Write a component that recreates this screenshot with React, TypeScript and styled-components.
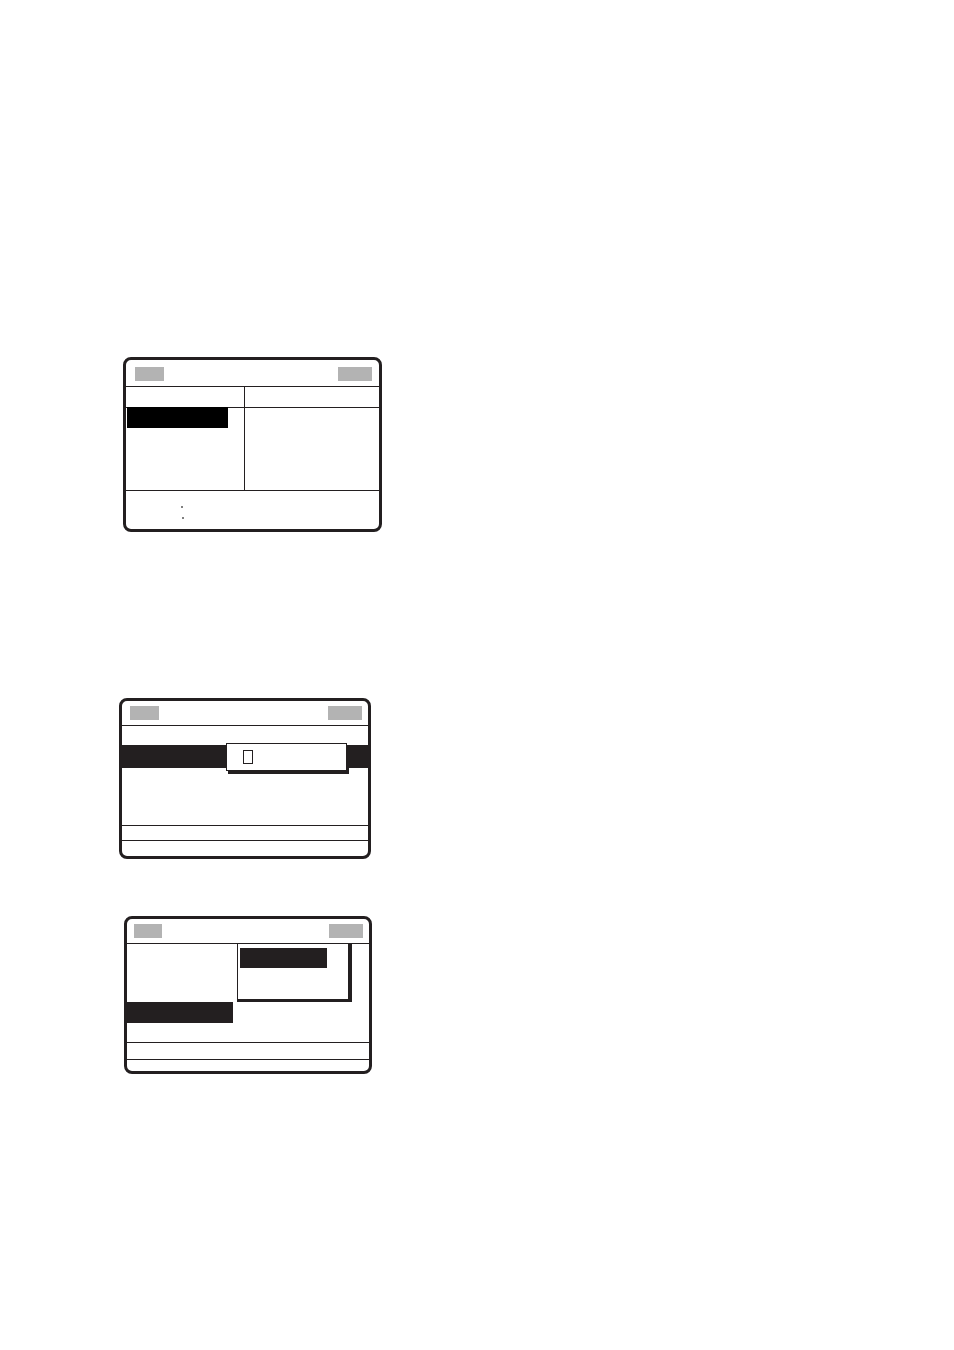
import React from "react";
import styled, { createGlobalStyle } from "styled-components";

const INK = "#231f20";
const GRAY = "#b3b3b3";

const Global = createGlobalStyle`
  html, body { margin: 0; padding: 0; background: #ffffff; }
  body { font-family: "Liberation Sans", Arial, sans-serif; }
`;

const Page = styled.div`
  width: 954px;
  height: 1350px;
  display: flex;
  flex-direction: column;
  align-items: flex-start;
  overflow: hidden;
`;

const Frame = styled.div<{ $w: number; $h: number; $left: number; $top: number }>`
  box-sizing: border-box;
  width: ${(p) => p.$w}px;
  height: ${(p) => p.$h}px;
  margin-left: ${(p) => p.$left}px;
  margin-top: ${(p) => p.$top}px;
  border: 3px solid ${INK};
  border-radius: 8px;
  display: flex;
  flex-direction: column;
  flex-shrink: 0;
  background: #fff;
`;

const Header = styled.div<{ $h: number; $pt: number; $pl: number; $pr: number }>`
  box-sizing: border-box;
  height: ${(p) => p.$h}px;
  padding: ${(p) => `${p.$pt}px ${p.$pr}px 0 ${p.$pl}px`};
  display: flex;
  justify-content: space-between;
  align-items: flex-start;
  flex-shrink: 0;
`;

const Key = styled.span<{ $w: number }>`
  display: block;
  width: ${(p) => p.$w}px;
  height: 14px;
  background: ${GRAY};
`;

const Rule = styled.div`
  height: 1px;
  background: ${INK};
  flex-shrink: 0;
`;

const Space = styled.div<{ $h: number }>`
  height: ${(p) => p.$h}px;
  flex-shrink: 0;
  position: relative;
`;

const Split = styled.div`
  display: grid;
  grid-template-columns: 119px 1fr;
  height: 103px;
  flex-shrink: 0;
`;

const Column = styled.div<{ $divider?: boolean }>`
  display: flex;
  flex-direction: column;
  border-right: ${(p) => (p.$divider ? `1px solid ${INK}` : "none")};
`;

const ColHead = styled.div`
  height: 20px;
  border-bottom: 1px solid ${INK};
  flex-shrink: 0;
`;

const HighlightBar = styled.div<{ $w?: number; $h: number; $ml?: number; $mt?: number; $color?: string }>`
  width: ${(p) => (p.$w ? `${p.$w}px` : "auto")};
  height: ${(p) => p.$h}px;
  margin-left: ${(p) => p.$ml ?? 0}px;
  margin-top: ${(p) => p.$mt ?? 0}px;
  background: ${(p) => p.$color ?? INK};
  flex-shrink: 0;
  position: relative;
`;

const Footer = styled.div`
  flex: 1;
  position: relative;
  display: flex;
  flex-direction: column;
  align-items: flex-start;
  padding: 15px 0 0 55px;
  gap: 9px;
  box-sizing: border-box;
`;

const Dot = styled.span<{ $dx?: number }>`
  display: block;
  width: 2px;
  height: 2px;
  border-radius: 1px;
  background: #555;
  margin-left: ${(p) => p.$dx ?? 0}px;
`;

const InputPopup = styled.div`
  position: absolute;
  left: 104px;
  top: -2px;
  width: 121px;
  height: 28px;
  box-sizing: border-box;
  background: #fff;
  border: 1px solid ${INK};
  box-shadow: 2px 3px 0 ${INK};
`;

const Cursor = styled.span`
  position: absolute;
  left: 16px;
  top: 6px;
  width: 10px;
  height: 14px;
  box-sizing: border-box;
  border: 1.5px solid ${INK};
`;

const MenuPopup = styled.div`
  position: absolute;
  left: 110px;
  top: -1px;
  width: 115px;
  height: 59px;
  box-sizing: border-box;
  background: #fff;
  border: 1px solid ${INK};
  border-right-width: 4px;
  border-bottom-width: 3px;
  padding: 4px 0 0 2px;
`;

const MenuItem = styled.div`
  width: 87px;
  height: 20px;
  background: ${INK};
`;

export default function App() {
  return (
    <Page>
      <Global />

      <Frame $w={259} $h={175} $left={123} $top={357}>
        <Header $h={26} $pt={7} $pl={9} $pr={7}>
          <Key $w={29} />
          <Key $w={34} />
        </Header>
        <Rule />
        <Split>
          <Column $divider>
            <ColHead />
            <HighlightBar $w={101} $h={21} $ml={1} $mt={-1} $color="#000" />
          </Column>
          <Column>
            <ColHead />
          </Column>
        </Split>
        <Rule />
        <Footer>
          <Dot />
          <Dot $dx={1} />
        </Footer>
      </Frame>

      <Frame $w={252} $h={161} $left={119} $top={166}>
        <Header $h={24} $pt={5} $pl={8} $pr={6}>
          <Key $w={29} />
          <Key $w={34} />
        </Header>
        <Rule />
        <Space $h={19} />
        <HighlightBar $h={23}>
          <InputPopup>
            <Cursor />
          </InputPopup>
        </HighlightBar>
        <Space $h={57} />
        <Rule />
        <Space $h={14} />
        <Rule />
      </Frame>

      <Frame $w={248} $h={158} $left={124} $top={57}>
        <Header $h={24} $pt={5} $pl={7} $pr={6}>
          <Key $w={28} />
          <Key $w={34} />
        </Header>
        <Rule />
        <Space $h={58}>
          <MenuPopup>
            <MenuItem />
          </MenuPopup>
        </Space>
        <HighlightBar $w={106} $h={21} />
        <Space $h={19} />
        <Rule />
        <Space $h={16} />
        <Rule />
      </Frame>
    </Page>
  );
}
